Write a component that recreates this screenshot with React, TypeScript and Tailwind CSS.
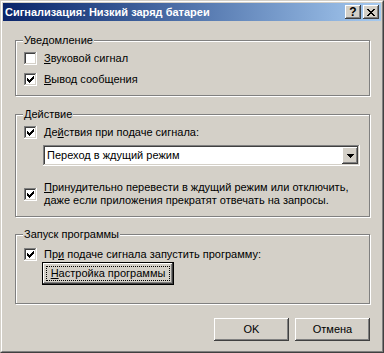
import React from 'react'

const raised =
  'shadow-[inset_-1px_-1px_#404040,inset_1px_1px_#ffffff,inset_-2px_-2px_#808080,inset_2px_2px_#d4d0c8]'
const sunken =
  'shadow-[inset_-1px_-1px_#ffffff,inset_1px_1px_#808080,inset_-2px_-2px_#d4d0c8,inset_2px_2px_#404040]'

const CheckBox = ({ checked }: { checked?: boolean }) => (
  <span className={`w-[13px] h-[13px] shrink-0 bg-white flex items-center justify-center ${sunken}`}>
    {checked && (
      <svg width="7" height="7" viewBox="0 0 7 7" shapeRendering="crispEdges">
        <path
          d="M0 2h1v3H0zM1 3h1v3H1zM2 4h1v3H2zM3 3h1v3H3zM4 2h1v3H4zM5 1h1v3H5zM6 0h1v3H6z"
          fill="#000"
        />
      </svg>
    )}
  </span>
)

const Row = ({
  checked,
  className = '',
  children,
}: {
  checked?: boolean
  className?: string
  children: React.ReactNode
}) => (
  <div className={`flex ml-[8px] gap-[7px] ${className}`}>
    <CheckBox checked={checked} />
    <span className="leading-[13px]">{children}</span>
  </div>
)

const Group = ({
  title,
  className = '',
  children,
}: {
  title: string
  className?: string
  children: React.ReactNode
}) => (
  <div
    className={`flex flex-col border border-[#808080] shadow-[1px_1px_0_#ffffff,inset_1px_1px_0_#ffffff] ${className}`}
  >
    <div className="-mt-[7px] ml-[7px] px-px self-start bg-[#d4d0c8] leading-[13px]">{title}</div>
    {children}
  </div>
)

const Btn = ({ children }: { children: React.ReactNode }) => (
  <button className={`w-[75px] h-[23px] bg-[#d4d0c8] flex items-center justify-center leading-[13px] ${raised}`}>
    {children}
  </button>
)

export default function App() {
  return (
    <div className="w-[384px] h-[353px] bg-[#d4d0c8] text-[11px] text-black font-['Liberation_Sans',Arial,sans-serif] border border-t-[#d4d0c8] border-l-[#d4d0c8] border-r-[#404040] border-b-[#404040]">
      <div className="h-full flex flex-col p-px border border-t-white border-l-white border-r-[#808080] border-b-[#808080]">
        {/* title bar */}
        <div className="h-[18px] shrink-0 flex items-center pl-[2px] pr-[2px] bg-linear-to-r from-[#0a246a] to-[#a6caf0]">
          <span className="font-bold text-white leading-[13px]">Сигнализация: Низкий заряд батареи</span>
          <div className="ml-auto flex gap-[2px]">
            <div className={`w-[16px] h-[14px] bg-[#d4d0c8] flex items-center justify-center font-bold text-[12px] leading-[12px] ${raised}`}>
              ?
            </div>
            <div className={`w-[16px] h-[14px] bg-[#d4d0c8] flex items-center justify-center ${raised}`}>
              <svg width="8" height="7" viewBox="0 0 8 7" shapeRendering="crispEdges">
                <path
                  d="M0 0h2v1H0zM6 0h2v1H6zM1 1h2v1H1zM5 1h2v1H5zM2 2h4v1H2zM3 3h2v1H3zM2 4h4v1H2zM1 5h2v1H1zM5 5h2v1H5zM0 6h2v1H0zM6 6h2v1H6z"
                  fill="#000"
                />
              </svg>
            </div>
          </div>
        </div>

        {/* client area */}
        <div className="flex flex-col pl-[12px] pr-[11px]">
          <Group title="Уведомление" className="mt-[19px] h-[56px]">
            <Row className="mt-[5px]">
              <u>З</u>вуковой сигнал
            </Row>
            <Row checked className="mt-[8px]">
              <u>В</u>ывод сообщения
            </Row>
          </Group>

          <Group title="Действие" className="mt-[18px] h-[103px]">
            <Row checked className="mt-[5px]">
              Де<u>й</u>ствия при подаче сигнала:
            </Row>
            <div className={`mt-[6px] ml-[27px] w-[317px] h-[21px] bg-white flex items-center p-[2px] ${sunken}`}>
              <span className="flex-1 pl-[2px] leading-[13px]">Переход в ждущий режим</span>
              <div className={`w-[16px] h-[17px] bg-[#d4d0c8] flex items-center justify-center ${raised}`}>
                <svg width="7" height="4" viewBox="0 0 7 4" shapeRendering="crispEdges">
                  <path d="M0 0h7v1H0zM1 1h5v1H1zM2 2h3v1H2zM3 3h1v1H3z" fill="#000" />
                </svg>
              </div>
            </div>
            <div className="mt-[15px] ml-[8px] flex items-center gap-[7px]">
              <CheckBox checked />
              <span className="leading-[13px]">
                <u>П</u>ринудительно перевести в ждущий режим или отключить,
                <br />
                даже если приложения прекратят отвечать на запросы.
              </span>
            </div>
          </Group>

          <Group title="Запуск программы" className="mt-[17px] h-[70px]">
            <Row checked className="mt-[7px]">
              Пр<u>и</u> подаче сигнала запустить программу:
            </Row>
            <button className="mt-[1px] ml-[26px] w-[132px] h-[23px] border border-black bg-[#d4d0c8] shadow-[inset_-1px_-1px_#404040,inset_1px_1px_#ffffff,inset_-2px_-2px_#808080] p-[3px] flex">
              <span className="flex-1 border border-dotted border-black flex items-center justify-center leading-[13px]">
                <u>Н</u>астройка программы
              </span>
            </button>
          </Group>

          <div className="mt-[14px] flex justify-end gap-[6px]">
            <Btn>OK</Btn>
            <Btn>Отмена</Btn>
          </div>
        </div>
      </div>
    </div>
  )
}
